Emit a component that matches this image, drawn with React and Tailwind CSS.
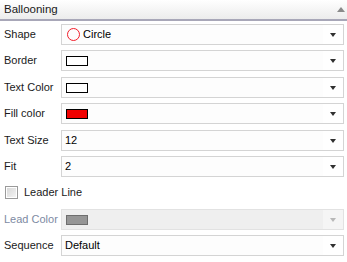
import React from "react";

const Arrow = ({ disabled }) => (
  <div className="w-[20px] h-full flex items-center justify-center bg-white">
    <div
      className={`w-0 h-0 border-l-[3px] border-r-[3px] border-t-[4px] border-l-transparent border-r-transparent ${
        disabled ? "border-t-[#b8b8b8]" : "border-t-[#303030]"
      }`}
    />
  </div>
);

const Box = ({ children, disabled }) => (
  <div
    className={`ml-auto w-[283px] h-[21px] flex items-center border ${
      disabled ? "bg-[#efefef] border-[#e2e2e2]" : "bg-[#fdfdfd] border-[#d4d4d4]"
    }`}
  >
    <div className="flex-1 flex items-center pl-[3px] gap-[3px]">{children}</div>
    {disabled ? (
      <div className="w-[20px] h-full flex items-center justify-center bg-[#f5f5f5]">
        <div className="w-0 h-0 border-l-[3px] border-r-[3px] border-t-[4px] border-l-transparent border-r-transparent border-t-[#b8b8b8]" />
      </div>
    ) : (
      <Arrow />
    )}
  </div>
);

const Swatch = ({ fill, border }) => (
  <div className={`ml-[1px] w-[22px] h-[10px] border ${border}`} style={{ background: fill }} />
);

const Row = ({ label, muted, children, disabled, mt }) => (
  <div className={`flex items-center pr-[3px] ${mt}`}>
    <span className={`pl-[4px] ${muted ? "text-[#7d8aa3]" : "text-[#1a1a1a]"}`}>{label}</span>
    <Box disabled={disabled}>{children}</Box>
  </div>
);

export default function App() {
  return (
    <div
      className="w-[347px] h-[262px] bg-white text-[11px] leading-none"
      style={{ fontFamily: '"Liberation Sans", Arial, sans-serif' }}
    >
      {/* Header */}
      <div className="h-[21px] flex items-center justify-between pl-[4px] pr-[2px] bg-gradient-to-b from-white to-[#ececec] border-b-2 border-[#a8a7b8]">
        <span className="text-[#1a1a1a] text-[11.5px]">Ballooning</span>
        <div className="w-0 h-0 border-l-[4px] border-r-[4px] border-b-[5px] border-l-transparent border-r-transparent border-b-[#8a8a8a]" />
      </div>

      <div className="flex flex-col">
        <Row label="Shape" mt="mt-[3px]">
          <div className="w-[13px] h-[13px] rounded-full border border-[#f21d2a] ml-[2px]" />
          <span>Circle</span>
        </Row>
        <Row label="Border" mt="mt-[5px]">
          <Swatch fill="#ffffff" border="border-black" />
        </Row>
        <Row label="Text Color" mt="mt-[6px]">
          <Swatch fill="#ffffff" border="border-black" />
        </Row>
        <Row label="Fill color" mt="mt-[5px]">
          <Swatch fill="#f00000" border="border-black" />
        </Row>
        <Row label="Text Size" mt="mt-[6px]">
          <span>12</span>
        </Row>
        <Row label="Fit" mt="mt-[5px]">
          <span>2</span>
        </Row>

        {/* Leader line checkbox */}
        <div className="flex items-center h-[20px] mt-[5px] pl-[5px] gap-[6px]">
          <div className="w-[13px] h-[13px] border border-[#9a9a9a] p-[1px] bg-white">
            <div className="w-full h-full bg-gradient-to-br from-[#d8d8d8] to-[#f4f4f4]" />
          </div>
          <span className="text-[#1a1a1a]">Leader Line</span>
        </div>

        <Row label="Lead Color" muted disabled mt="mt-[7px]">
          <Swatch fill="#969696" border="border-[#6e6e6e]" />
        </Row>
        <Row label="Sequence" mt="mt-[5px]">
          <span>Default</span>
        </Row>
      </div>

      {/* Footer line */}
      <div className="mt-[6px] h-[2px] bg-[#aaa6c2]" />
    </div>
  );
}
